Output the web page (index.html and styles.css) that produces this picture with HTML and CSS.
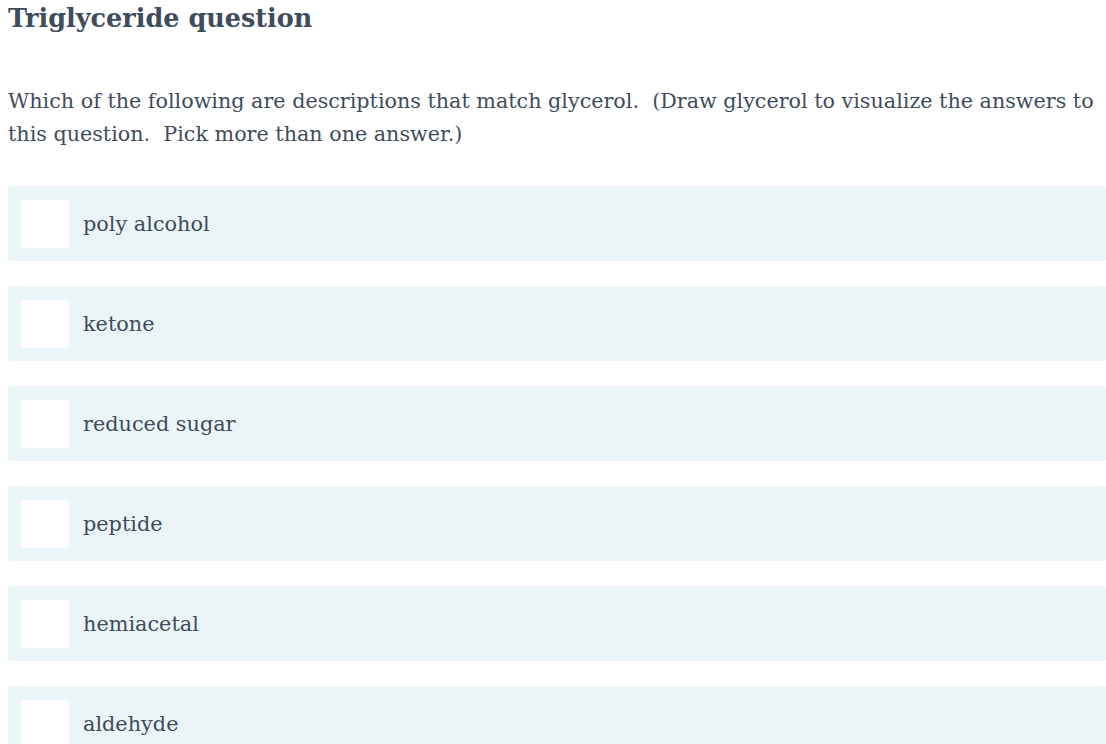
FILE: index.html
```html
<!DOCTYPE html>
<html>
<head>
<meta charset="utf-8">
<link rel="stylesheet" href="styles.css">
</head>
<body>
<div class="page">
  <h1 class="title">Triglyceride question</h1>
  <p class="prompt">Which of the following are descriptions that match glycerol.&nbsp; (Draw glycerol to visualize the answers to this question.&nbsp; Pick more than one answer.)</p>
  <div class="options">
    <label class="option"><span class="box"></span><span class="label">poly alcohol</span></label>
    <label class="option"><span class="box"></span><span class="label">ketone</span></label>
    <label class="option"><span class="box"></span><span class="label">reduced sugar</span></label>
    <label class="option"><span class="box"></span><span class="label">peptide</span></label>
    <label class="option"><span class="box"></span><span class="label">hemiacetal</span></label>
    <label class="option"><span class="box"></span><span class="label">aldehyde</span></label>
  </div>
</div>
</body>
</html>
```
FILE: styles.css
```css
html, body {
  margin: 0;
  padding: 0;
  background: #ffffff;
  overflow: hidden;
}
.page {
  padding: 0 0 0 8px;
  font-family: "DejaVu Serif", serif;
  color: #3f4c5c;
}
.title {
  margin: 0;
  padding-top: 2px;
  font-size: 25.5px;
  line-height: 32px;
  font-weight: bold;
}
.prompt {
  margin: 51px 0 0 0;
  font-size: 20.7px;
  line-height: 33px;
}
.options {
  margin-top: 35px;
  display: flex;
  flex-direction: column;
  gap: 25px;
}
.option {
  display: flex;
  align-items: center;
  gap: 14px;
  height: 75px;
  padding: 0 13px;
  background: #ebf5f7;
  border-radius: 3px;
  box-sizing: border-box;
}
.box {
  width: 48px;
  height: 48px;
  background: #ffffff;
  border-radius: 2px;
  flex: none;
}
.label {
  font-size: 20.8px;
}
```
